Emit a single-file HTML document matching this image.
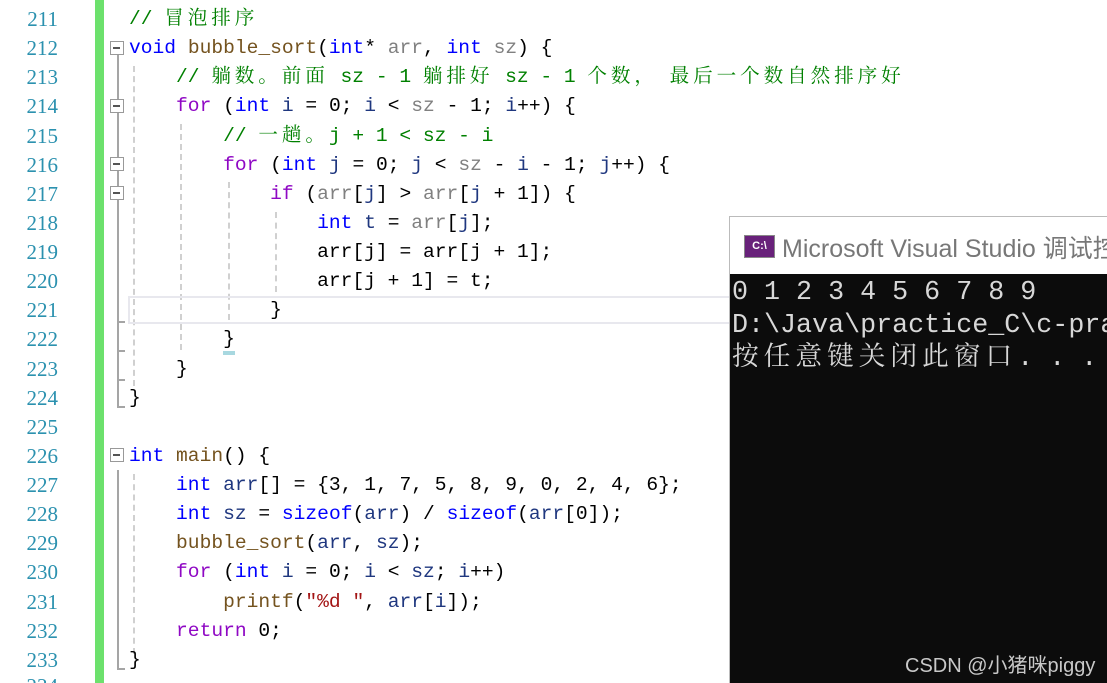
<!DOCTYPE html>
<html><head><meta charset="utf-8"><style>
*{margin:0;padding:0;box-sizing:border-box}
html,body{width:1107px;height:683px;overflow:hidden}
body{background:#fff;position:relative;font-family:"Liberation Mono","Noto Serif CJK SC",monospace}
.ln{position:absolute;left:0;width:58px;text-align:right;font-family:"Liberation Serif","Noto Serif CJK SC",serif;font-size:21px;color:#2b91af;height:29px;line-height:29px}
.code{position:absolute;left:129px;font-size:19.6px;height:29px;line-height:29px;white-space:pre;color:#000}
.c{letter-spacing:3.9px}
.k{color:#0000ff}.p{color:#8f08c4}.m{color:#008000}.f{color:#74531f}.g{color:#808080}.v{color:#1f377f}.s{color:#a31515}
.bar{position:absolute;left:95px;top:0;width:9px;height:683px;background:#6ce16c}
.fold{position:absolute;left:110px;width:14px;height:14px;border:1.5px solid #999;background:#fff}
.fold:after{content:"";position:absolute;left:2px;top:5px;width:7px;height:1.6px;background:#555}
.vl{position:absolute;left:117px;width:2px;background:#a5a5a5}
.hl{position:absolute;left:117px;height:2px;width:8px;background:#a5a5a5}
.dg{position:absolute;width:0;border-left:2px dashed #d0d0d0}
</style></head><body>
<div class="bar"></div>
<div class="vl" style="top:55px;height:352px"></div>
<div class="hl" style="top:321px"></div><div class="hl" style="top:350px"></div><div class="hl" style="top:379px"></div><div class="hl" style="top:406px"></div>
<div class="vl" style="top:470px;height:200px"></div><div class="hl" style="top:668px"></div>
<div class="fold" style="top:41px"></div><div class="fold" style="top:99px"></div><div class="fold" style="top:157px"></div><div class="fold" style="top:186px"></div><div class="fold" style="top:448px"></div>
<div class="dg" style="left:133px;top:66px;height:320px"></div>
<div class="dg" style="left:180px;top:124px;height:226px"></div>
<div class="dg" style="left:228px;top:182px;height:138px"></div>
<div class="dg" style="left:275px;top:212px;height:80px"></div>
<div class="dg" style="left:133px;top:474px;height:180px"></div>
<div style="position:absolute;left:128px;top:296px;width:610px;height:28px;border:2px solid #e8e8ee"></div>
<div style="position:absolute;left:223px;top:351px;width:12px;height:4px;background:#a8d8e0"></div>

<div class="ln" style="top:5px">211</div><div class="code" style="top:5px"><span class="m">// <span class="c">冒泡排序</span></span></div>
<div class="ln" style="top:34px">212</div><div class="code" style="top:34px"><span class="k">void</span> <span class="f">bubble_sort</span>(<span class="k">int</span>* <span class="g">arr</span>, <span class="k">int</span> <span class="g">sz</span>) {</div>
<div class="ln" style="top:63px">213</div><div class="code" style="top:63px"><span class="m">    // <span class="c">躺数。前面</span> sz - 1 <span class="c">躺排好</span> sz - 1 <span class="c">个数，</span> <span class="c">最后一个数自然排序好</span></span></div>
<div class="ln" style="top:92px">214</div><div class="code" style="top:92px">    <span class="p">for</span> (<span class="k">int</span> <span class="v">i</span> = 0; <span class="v">i</span> &lt; <span class="g">sz</span> - 1; <span class="v">i</span>++) {</div>
<div class="ln" style="top:122px">215</div><div class="code" style="top:122px"><span class="m">        // <span class="c">一趟。</span>j + 1 &lt; sz - i</span></div>
<div class="ln" style="top:151px">216</div><div class="code" style="top:151px">        <span class="p">for</span> (<span class="k">int</span> <span class="v">j</span> = 0; <span class="v">j</span> &lt; <span class="g">sz</span> - <span class="v">i</span> - 1; <span class="v">j</span>++) {</div>
<div class="ln" style="top:180px">217</div><div class="code" style="top:180px">            <span class="p">if</span> (<span class="g">arr</span>[<span class="v">j</span>] &gt; <span class="g">arr</span>[<span class="v">j</span> + 1]) {</div>
<div class="ln" style="top:209px">218</div><div class="code" style="top:209px">                <span class="k">int</span> <span class="v">t</span> = <span class="g">arr</span>[<span class="v">j</span>];</div>
<div class="ln" style="top:238px">219</div><div class="code" style="top:238px">                arr[j] = arr[j + 1];</div>
<div class="ln" style="top:267px">220</div><div class="code" style="top:267px">                arr[j + 1] = t;</div>
<div class="ln" style="top:296px">221</div><div class="code" style="top:296px">            }</div>
<div class="ln" style="top:325px">222</div><div class="code" style="top:325px">        }</div>
<div class="ln" style="top:355px">223</div><div class="code" style="top:355px">    }</div>
<div class="ln" style="top:384px">224</div><div class="code" style="top:384px">}</div>
<div class="ln" style="top:413px">225</div>
<div class="ln" style="top:442px">226</div><div class="code" style="top:442px"><span class="k">int</span> <span class="f">main</span>() {</div>
<div class="ln" style="top:471px">227</div><div class="code" style="top:471px">    <span class="k">int</span> <span class="v">arr</span>[] = {3, 1, 7, 5, 8, 9, 0, 2, 4, 6};</div>
<div class="ln" style="top:500px">228</div><div class="code" style="top:500px">    <span class="k">int</span> <span class="v">sz</span> = <span class="k">sizeof</span>(<span class="v">arr</span>) / <span class="k">sizeof</span>(<span class="v">arr</span>[0]);</div>
<div class="ln" style="top:529px">229</div><div class="code" style="top:529px">    <span class="f">bubble_sort</span>(<span class="v">arr</span>, <span class="v">sz</span>);</div>
<div class="ln" style="top:558px">230</div><div class="code" style="top:558px">    <span class="p">for</span> (<span class="k">int</span> <span class="v">i</span> = 0; <span class="v">i</span> &lt; <span class="v">sz</span>; <span class="v">i</span>++)</div>
<div class="ln" style="top:588px">231</div><div class="code" style="top:588px">        <span class="f">printf</span>(<span class="s">"%d "</span>, <span class="v">arr</span>[<span class="v">i</span>]);</div>
<div class="ln" style="top:617px">232</div><div class="code" style="top:617px">    <span class="p">return</span> 0;</div>
<div class="ln" style="top:646px">233</div><div class="code" style="top:646px">}</div>
<div class="ln" style="top:672px;height:11px;overflow:hidden">234</div>

<div style="position:absolute;left:729px;top:216px;width:378px;height:467px;border:1px solid #bbb;border-right:none;border-bottom:none;background:#fff;overflow:hidden">
  <div style="position:absolute;left:14px;top:18px;width:31px;height:23px;background:#68217a;border:1px solid #888;color:#fff;font:bold 11px 'Liberation Sans',sans-serif;line-height:21px;text-align:center">C:\</div>
  <div style="position:absolute;left:52px;top:12px;font:25px 'Liberation Sans','Noto Sans CJK SC',sans-serif;color:#777;white-space:nowrap">Microsoft Visual Studio 调试控制台</div>
  <div style="position:absolute;left:0;top:57px;width:378px;height:410px;background:#0c0c0c;color:#d8d8d8;font-family:'Liberation Mono','Noto Serif CJK SC',monospace;font-size:26.7px;line-height:33px;white-space:pre;padding:3px 0 0 2px;overflow:hidden"><div>0 1 2 3 4 5 6 7 8 9</div><div>D:\Java\practice_C\c-practice</div><div><span style="letter-spacing:5px">按任意键关闭此窗口</span>. . .</div></div>
  <div style="position:absolute;left:175px;top:432px;font:20px 'Liberation Sans','Noto Sans CJK SC',sans-serif;color:#c8c8c8;white-space:nowrap">CSDN @小猪咪piggy</div>
</div>
</body></html>
